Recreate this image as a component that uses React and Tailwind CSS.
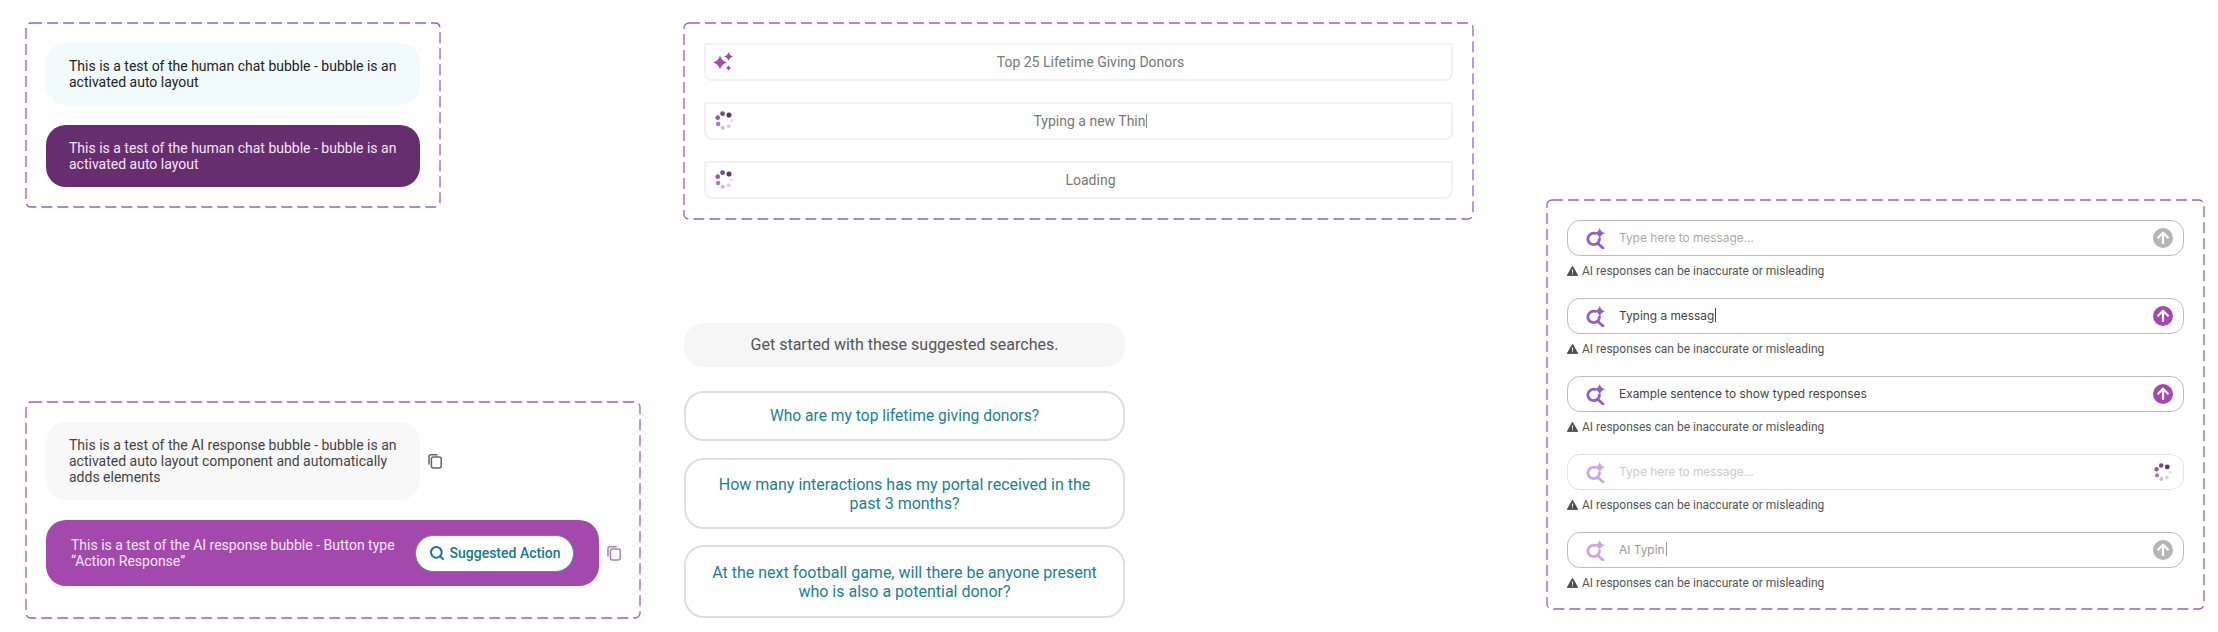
import { Search } from "lucide-react";

const PURPLE = "#a349ae";

function DashedBox({ className = "", children }) {
  return (
    <div className={`relative ${className}`}>
      <svg className="absolute inset-0 w-full h-full overflow-visible pointer-events-none">
        <rect x="0" y="0" width="100%" height="100%" rx="5" fill="none" stroke="#9b5fc4" strokeWidth="1.3" strokeDasharray="11 5" />
      </svg>
      {children}
    </div>
  );
}

function star(cx, cy, r) {
  const k = r * 0.2;
  return `M${cx} ${cy - r}Q${cx + k} ${cy - k} ${cx + r} ${cy}Q${cx + k} ${cy + k} ${cx} ${cy + r}Q${cx - k} ${cy + k} ${cx - r} ${cy}Q${cx - k} ${cy - k} ${cx} ${cy - r}Z`;
}

function Sparkles() {
  return (
    <svg width="20" height="20" viewBox="0 0 20 20" className="shrink-0">
      <path d={star(7, 10.5, 7)} fill={PURPLE} />
      <path d={star(15.5, 4.5, 4.6)} fill={PURPLE} />
      <path d={star(15.5, 16, 2.8)} fill={PURPLE} />
    </svg>
  );
}

function Spinner({ size = 19, className = "" }) {
  const dots = [
    [13.3, 3.9, 2.4, "#662e6e"],
    [7.2, 2.5, 2.3, "#7b4a85"],
    [2.6, 6.3, 2.2, "#8e5f9a"],
    [3, 12.4, 2.1, "#a67db3"],
    [7.3, 16, 1.9, "#c2c2c2"],
    [13, 14.4, 1.8, "#d4d4d4"],
    [16, 9.3, 1.6, "#e6e6e6"],
  ];
  return (
    <svg width={size} height={size} viewBox="0 0 19 19" className={`shrink-0 ${className}`}>
      {dots.map(([x, y, r, c]) => (
        <circle key={x} cx={x} cy={y} r={r} fill={c} />
      ))}
    </svg>
  );
}

function SearchSpark({ color }) {
  return (
    <svg width="20" height="21" viewBox="0 0 20 21" className="shrink-0">
      <path d="M10.2 5.7A5.8 5.8 0 1 0 13.4 10" fill="none" stroke={color} strokeWidth="2.8" />
      <path d="M11.6 15.2L17 20" fill="none" stroke={color} strokeWidth="2.8" strokeLinecap="round" />
      <path d={star(13.7, 5.3, 5.4)} fill={color} />
    </svg>
  );
}

function SendButton({ color }) {
  return (
    <svg width="20" height="20" viewBox="0 0 20 20" className="shrink-0">
      <circle cx="10" cy="10" r="10" fill={color} />
      <path d="M10 16V5M4.5 10.3L10 4.8L15.5 10.3" fill="none" stroke="#fff" strokeWidth="2.2" />
    </svg>
  );
}

function Warning() {
  return (
    <svg width="11" height="10" viewBox="0 0 11 10" className="shrink-0 -mr-px">
      <path d="M5.5 0.3L10.8 9.6H0.2Z" fill="#4d4d4d" stroke="#4d4d4d" strokeWidth="0.9" strokeLinejoin="round" />
      <path d="M5 3.4H6V6.6H5ZM5 7.3H6V8.3H5Z" fill="#fff" />
    </svg>
  );
}

function CopyIcon({ color, className = "" }) {
  return (
    <svg width="14" height="15" viewBox="0 0 14 15" className={`shrink-0 ${className}`} fill="none" stroke={color} strokeWidth="1.5">
      <rect x="3.4" y="3" width="9.8" height="11" rx="2" />
      <path d="M1 10.5V2.6A1.8 1.8 0 0 1 2.8 0.8H9.6" />
    </svg>
  );
}

function Caret({ className = "bg-[#444]" }) {
  return <span className={`inline-block w-px h-[14px] ml-px align-[-2px] ${className}`} />;
}

function LoadRow({ icon, children }) {
  return (
    <div className="flex items-center h-[38px] pl-[7px] pr-[8px] gap-[5px] bg-white border-2 border-[#f1f1f1] rounded-t-[3px] rounded-b-lg">
      {icon}
      <div className="flex-1 text-center text-sm leading-4 text-[#777]">{children}</div>
    </div>
  );
}

function Suggestion({ className, children }) {
  return (
    <div className={`flex items-center justify-center text-center px-6 rounded-[20px] border-2 border-[#dedede] leading-[19px] text-[#1a7f96] ${className}`}>
      {children}
    </div>
  );
}

function ChatInput({ text, textColor, border, iconColor, right }) {
  return (
    <div>
      <div className={`flex items-center h-[36px] pl-[18px] pr-[10px] rounded-[13px] border-[1.5px] bg-white ${border}`}>
        <SearchSpark color={iconColor} />
        <div className={`flex-1 ml-[13px] font-['Inter',sans-serif] text-[11.9px] leading-4 ${textColor}`}>{text}</div>
        {right}
      </div>
      <div className="flex items-center gap-[5px] mt-[7px] h-4 text-xs leading-4 text-[#555]">
        <Warning />
        <span>AI responses can be inaccurate or misleading</span>
      </div>
    </div>
  );
}

export default function App() {
  return (
    <div className="flex w-[2218px] h-[632px] overflow-hidden bg-white font-['Roboto',sans-serif]">
      <div className="ml-[26px] w-[614px] shrink-0 pt-[23px]">
        <DashedBox className="w-[414px] h-[184px] p-5 flex flex-col gap-5">
          <div className="h-[62px] rounded-[20px] bg-[#f1fbfd] pl-[23px] pr-4 flex items-center text-sm leading-4 text-[#222]">
            <p>This is a test of the human chat bubble - bubble is an activated auto layout</p>
          </div>
          <div className="h-[62px] rounded-[20px] bg-[#662e6e] pl-[23px] pr-4 flex items-center text-sm leading-4 text-[#f6e6f8]">
            <p>This is a test of the human chat bubble - bubble is an activated auto layout</p>
          </div>
        </DashedBox>

        <DashedBox className="mt-[195px] h-[216px] p-5 flex flex-col gap-5">
          <div className="flex items-center gap-2">
            <div className="w-[374px] h-[78px] shrink-0 rounded-[20px] bg-[#f8f8f8] pl-[23px] pr-4 flex items-center text-sm leading-4 text-[#444]">
              <p>This is a test of the AI response bubble - bubble is an activated auto layout component and automatically adds elements</p>
            </div>
            <CopyIcon color="#666" />
          </div>
          <div className="flex items-center gap-2">
            <div className="w-[553px] h-[66px] shrink-0 rounded-[20px] bg-[#a349ae] pl-[25px] pr-[25px] flex items-center justify-between text-sm leading-4 text-[#f6e6f8]">
              <p className="w-[330px]">This is a test of the AI response bubble - Button type “Action Response”</p>
              <div className="flex items-center justify-center gap-[5px] w-[159px] h-[37px] rounded-full bg-white border-[1.5px] border-[#4f8ab5] text-sm font-medium text-[#157a91]">
                <Search size={16} strokeWidth={3} />
                <span>Suggested Action</span>
              </div>
            </div>
            <CopyIcon color="#b47cc0" />
          </div>
        </DashedBox>
      </div>

      <div className="ml-[44px] w-[789px] shrink-0 pt-[23px]">
        <DashedBox className="h-[196px] p-5 flex flex-col gap-[21px]">
          <LoadRow icon={<Sparkles />}>Top 25 Lifetime Giving Donors</LoadRow>
          <LoadRow icon={<Spinner size={20} className="ml-[2px] -mr-[2px]" />}>Typing a new Thin<Caret className="bg-[#888]" /></LoadRow>
          <LoadRow icon={<Spinner size={20} className="ml-[2px] -mr-[2px]" />}>Loading</LoadRow>
        </DashedBox>

        <div className="mt-[104px] w-[441px] flex flex-col">
          <div className="h-[44px] rounded-[20px] bg-[#f6f6f6] flex items-center justify-center text-base text-[#555]">
            Get started with these suggested searches.
          </div>
          <Suggestion className="mt-6 h-[50px] text-[15.6px]">Who are my top lifetime giving donors?</Suggestion>
          <Suggestion className="mt-[17px] h-[71px] text-base">How many interactions has my portal received in the past 3 months?</Suggestion>
          <Suggestion className="mt-4 h-[73px] text-base">At the next football game, will there be anyone present who is also a potential donor?</Suggestion>
        </div>
      </div>

      <div className="ml-[74px] w-[657px] shrink-0 pt-[200px]">
        <DashedBox className="h-[409px] pt-5 px-5 flex flex-col gap-[19px]">
          <ChatInput text="Type here to message..." textColor="text-[#aaa]" border="border-[#bdbdbd]" iconColor="#9160c4" right={<SendButton color="#b5b5b5" />} />
          <ChatInput text={<>Typing a messag<Caret /></>} textColor="text-[#444]" border="border-[#bdbdbd]" iconColor="#9160c4" right={<SendButton color={PURPLE} />} />
          <ChatInput text="Example sentence to show typed responses" textColor="text-[#444]" border="border-[#bdbdbd]" iconColor="#9160c4" right={<SendButton color={PURPLE} />} />
          <ChatInput text="Type here to message..." textColor="text-[#ccc]" border="border-[#e2e2e2]" iconColor="#cfa6e2" right={<Spinner />} />
          <ChatInput text={<>AI Typin<Caret className="bg-[#999]" /></>} textColor="text-[#999]" border="border-[#bdbdbd]" iconColor="#cfa6e2" right={<SendButton color="#b5b5b5" />} />
        </DashedBox>
      </div>
    </div>
  );
}
